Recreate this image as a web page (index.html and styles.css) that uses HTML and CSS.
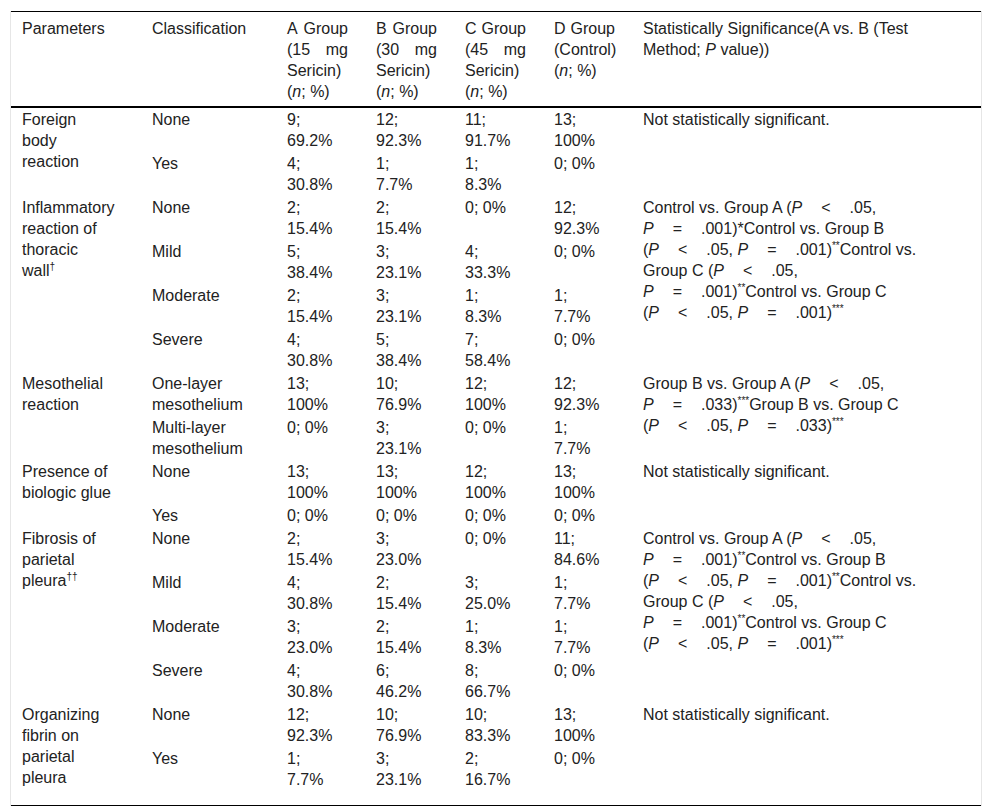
FILE: index.html
```html
<!DOCTYPE html>
<html lang="en">
<head>
<meta charset="utf-8">
<title>Histopathology results</title>
<link rel="stylesheet" href="styles.css">
</head>
<body>
<div class="frame">
<table class="tbl">
<colgroup>
<col class="w-p"><col class="w-c"><col class="w-n"><col class="w-n"><col class="w-n"><col class="w-n"><col class="w-s">
</colgroup>
<thead>
<tr>
<th class="p">Parameters</th>
<th class="c">Classification</th>
<th class="n">A Group (15 mg Sericin) (<i>n</i>; %)</th>
<th class="n">B Group (30 mg Sericin) (<i>n</i>; %)</th>
<th class="n">C Group (45 mg Sericin) (<i>n</i>; %)</th>
<th class="n">D Group (Control) (<i>n</i>; %)</th>
<th class="s">Statistically Significance(A vs. B (Test Method; <i>P</i> value))</th>
</tr>
</thead>
<tbody>
<tr>
<td class="p" rowspan="2">Foreign body reaction</td>
<td class="c">None</td>
<td class="n">9; 69.2%</td><td class="n">12; 92.3%</td><td class="n">11; 91.7%</td><td class="n">13; 100%</td>
<td class="s" rowspan="2">Not statistically significant.</td>
</tr>
<tr>
<td class="c">Yes</td>
<td class="n">4; 30.8%</td><td class="n">1; 7.7%</td><td class="n">1; 8.3%</td><td class="n">0; 0%</td>
</tr>
<tr>
<td class="p" rowspan="4">Inflammatory reaction of thoracic wall<sup>†</sup></td>
<td class="c">None</td>
<td class="n">2; 15.4%</td><td class="n">2; 15.4%</td><td class="n">0; 0%</td><td class="n">12; 92.3%</td>
<td class="s" rowspan="4">Control vs. Group A (<i>P</i><span class="op">&lt;</span>.05, <i>P</i><span class="op">=</span>.001)*Control vs. Group B (<i>P</i><span class="op">&lt;</span>.05, <i>P</i><span class="op">=</span>.001)<sup>**</sup>Control vs. Group C (<i>P</i><span class="op">&lt;</span>.05, <i>P</i><span class="op">=</span>.001)<sup>**</sup>Control vs. Group C (<i>P</i><span class="op">&lt;</span>.05, <i>P</i><span class="op">=</span>.001)<sup>***</sup></td>
</tr>
<tr>
<td class="c">Mild</td>
<td class="n">5; 38.4%</td><td class="n">3; 23.1%</td><td class="n">4; 33.3%</td><td class="n">0; 0%</td>
</tr>
<tr>
<td class="c">Moderate</td>
<td class="n">2; 15.4%</td><td class="n">3; 23.1%</td><td class="n">1; 8.3%</td><td class="n">1; 7.7%</td>
</tr>
<tr>
<td class="c">Severe</td>
<td class="n">4; 30.8%</td><td class="n">5; 38.4%</td><td class="n">7; 58.4%</td><td class="n">0; 0%</td>
</tr>
<tr>
<td class="p" rowspan="2">Mesothelial reaction</td>
<td class="c">One-layer mesothelium</td>
<td class="n">13; 100%</td><td class="n">10; 76.9%</td><td class="n">12; 100%</td><td class="n">12; 92.3%</td>
<td class="s" rowspan="2">Group B vs. Group A (<i>P</i><span class="op">&lt;</span>.05, <i>P</i><span class="op">=</span>.033)<sup>***</sup>Group B vs. Group C (<i>P</i><span class="op">&lt;</span>.05, <i>P</i><span class="op">=</span>.033)<sup>***</sup></td>
</tr>
<tr>
<td class="c">Multi-layer mesothelium</td>
<td class="n">0; 0%</td><td class="n">3; 23.1%</td><td class="n">0; 0%</td><td class="n">1; 7.7%</td>
</tr>
<tr>
<td class="p" rowspan="2">Presence of biologic glue</td>
<td class="c">None</td>
<td class="n">13; 100%</td><td class="n">13; 100%</td><td class="n">12; 100%</td><td class="n">13; 100%</td>
<td class="s" rowspan="2">Not statistically significant.</td>
</tr>
<tr>
<td class="c">Yes</td>
<td class="n">0; 0%</td><td class="n">0; 0%</td><td class="n">0; 0%</td><td class="n">0; 0%</td>
</tr>
<tr>
<td class="p" rowspan="4">Fibrosis of parietal pleura<sup>††</sup></td>
<td class="c">None</td>
<td class="n">2; 15.4%</td><td class="n">3; 23.0%</td><td class="n">0; 0%</td><td class="n">11; 84.6%</td>
<td class="s" rowspan="4">Control vs. Group A (<i>P</i><span class="op">&lt;</span>.05, <i>P</i><span class="op">=</span>.001)<sup>**</sup>Control vs. Group B (<i>P</i><span class="op">&lt;</span>.05, <i>P</i><span class="op">=</span>.001)<sup>**</sup>Control vs. Group C (<i>P</i><span class="op">&lt;</span>.05, <i>P</i><span class="op">=</span>.001)<sup>**</sup>Control vs. Group C (<i>P</i><span class="op">&lt;</span>.05, <i>P</i><span class="op">=</span>.001)<sup>***</sup></td>
</tr>
<tr>
<td class="c">Mild</td>
<td class="n">4; 30.8%</td><td class="n">2; 15.4%</td><td class="n">3; 25.0%</td><td class="n">1; 7.7%</td>
</tr>
<tr>
<td class="c">Moderate</td>
<td class="n">3; 23.0%</td><td class="n">2; 15.4%</td><td class="n">1; 8.3%</td><td class="n">1; 7.7%</td>
</tr>
<tr>
<td class="c">Severe</td>
<td class="n">4; 30.8%</td><td class="n">6; 46.2%</td><td class="n">8; 66.7%</td><td class="n">0; 0%</td>
</tr>
<tr>
<td class="p" rowspan="2">Organizing fibrin on parietal pleura</td>
<td class="c">None</td>
<td class="n">12; 92.3%</td><td class="n">10; 76.9%</td><td class="n">10; 83.3%</td><td class="n">13; 100%</td>
<td class="s" rowspan="2">Not statistically significant.</td>
</tr>
<tr class="last">
<td class="c">Yes</td>
<td class="n">1; 7.7%</td><td class="n">3; 23.1%</td><td class="n">2; 16.7%</td><td class="n">0; 0%</td>
</tr>
</tbody>
</table>
</div>
</body>
</html>
```
FILE: styles.css
```css
body {
  margin: 0;
  background: #fff;
  color: #222;
  font-family: "Liberation Sans", Arial, sans-serif;
  font-size: 16px;
  line-height: 21px;
}

.frame {
  margin: 11px 0 0 10px;
  width: 970px;
  border-left: 1px solid #e6e6e6;
  border-right: 1px solid #e6e6e6;
}

.tbl {
  width: 970px;
  table-layout: fixed;
  border-collapse: separate;
  border-spacing: 0;
  border-top: 1px solid #000;
  border-bottom: 1px solid #000;
}

.w-p { width: 130px; }
.w-c { width: 135px; }
.w-n { width: 89px; }
.w-s { width: 349px; }

th,
td {
  vertical-align: top;
  text-align: left;
  font-weight: normal;
  padding: 1px 0 1px 11px;
}

th {
  padding-top: 6px;
  padding-bottom: 4px;
  border-bottom: 2px solid #000;
}

.p { padding-right: 28px; }
.c { padding-right: 14px; }
td.n { padding-right: 28px; }
th.n { padding-right: 17px; text-align: justify; }
.s { padding-right: 43px; }

.last td { padding-bottom: 15px; }

.op { padding: 0 19px; }

sup {
  font-size: 10px;
  line-height: 0;
  vertical-align: 6px;
}
```
